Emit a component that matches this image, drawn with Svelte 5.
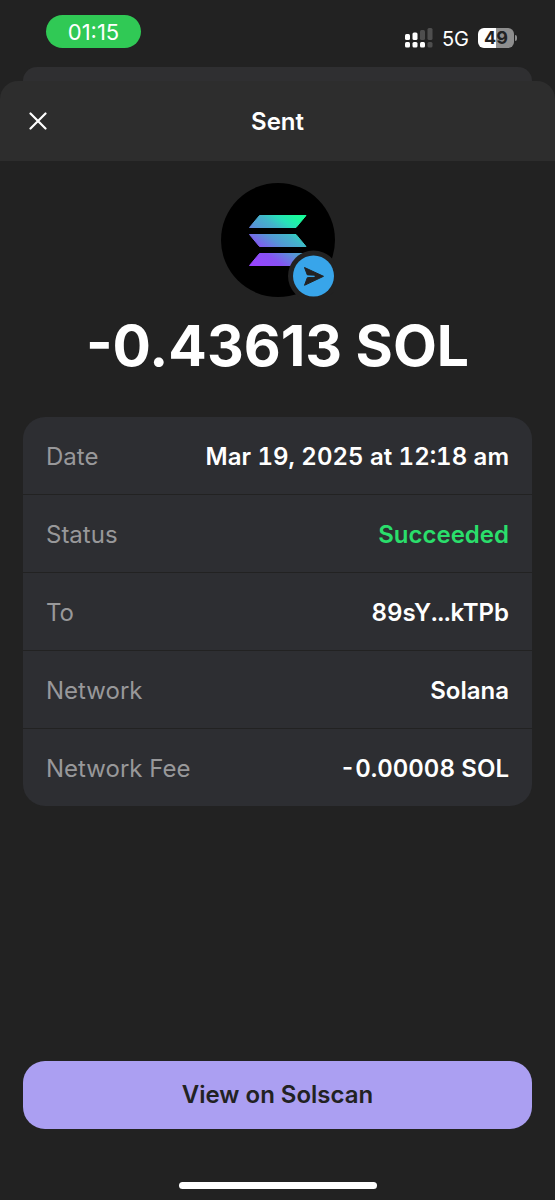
<script lang="ts">
	type Row = {
		label: string;
		value: string;
		success?: boolean;
	};

	const rows: Row[] = [
		{ label: 'Date', value: 'Mar 19, 2025 at 12:18 am' },
		{ label: 'Status', value: 'Succeeded', success: true },
		{ label: 'To', value: '89sY...kTPb' },
		{ label: 'Network', value: 'Solana' },
		{ label: 'Network Fee', value: '-0.00008 SOL' }
	];
</script>

<div class="screen">
	<div class="status-bar">
		<span class="status-bar__time">01:15</span>
		<div class="status-bar__right">
			<svg class="signal" width="28" height="20" viewBox="0 0 28 20" aria-hidden="true">
				<g fill="#fff">
					<rect x="0" y="6" width="5" height="6" rx="1.5" />
					<rect x="7.5" y="4.5" width="5" height="7.5" rx="1.5" />
					<rect x="0" y="14" width="5" height="5.5" rx="1.5" />
					<rect x="7.5" y="14" width="5" height="5.5" rx="1.5" />
					<rect x="15" y="14" width="5" height="5.5" rx="1.5" />
				</g>
				<g fill="#4e4e4e">
					<rect x="15" y="2" width="5" height="10" rx="1.5" />
					<rect x="22.5" y="0" width="5" height="12" rx="1.5" />
					<rect x="22.5" y="14" width="5" height="5.5" rx="1.5" />
				</g>
			</svg>
			<span class="status-bar__carrier">5G</span>
			<div class="battery"><span class="battery__level">49</span></div>
		</div>
	</div>

	<div class="sheet-behind"></div>

	<main class="sheet">
		<header class="sheet__header">
			<button type="button" class="close" aria-label="Close">
				<svg width="18" height="18" viewBox="0 0 18 18" aria-hidden="true">
					<path d="M1.5 1.5 16.5 16.5M16.5 1.5 1.5 16.5" stroke="#fff" stroke-width="2.2" stroke-linecap="round" />
				</svg>
			</button>
			<h1 class="sheet__title">Sent</h1>
		</header>

		<div class="sheet__body">
			<svg class="token" width="114" height="114" viewBox="0 0 114 114" aria-hidden="true">
				<defs>
					<linearGradient id="sol" gradientUnits="userSpaceOnUse" x1="36" y1="84" x2="74" y2="32">
						<stop offset="0" stop-color="#9945ff" />
						<stop offset="0.25" stop-color="#8752f3" />
						<stop offset="0.5" stop-color="#5497d5" />
						<stop offset="0.68" stop-color="#43b4ca" />
						<stop offset="0.82" stop-color="#28e0b9" />
						<stop offset="1" stop-color="#19fb9b" />
					</linearGradient>
				</defs>
				<circle cx="57" cy="57" r="57" fill="#000" />
				<g fill="url(#sol)" stroke="url(#sol)" stroke-linejoin="round">
					<path d="M38.5 32.5H85L75 44.5H28.5Z" />
					<path d="M28.5 51.5H75L85 63.5H38.5Z" />
					<path d="M38.5 70.5H85L75 82.5H28.5Z" />
				</g>
				<circle cx="92.5" cy="93" r="25.5" fill="#222" />
				<circle cx="92.5" cy="93" r="20.5" fill="#38a5ea" />
				<path
					d="M83.5 84.5 102.5 93.3 83.5 102.3 86.3 94.7 94 94.1V92.5L86.3 91.9Z"
					fill="#222"
					stroke="#222"
					stroke-linejoin="round"
				/>
				<path d="M85.5 93.3H93.5" stroke="#38a5ea" stroke-width="1.2" />
			</svg>

			<p class="amount">-0.43613 SOL</p>

			<dl class="details">
				{#each rows as row}
					<div class="details__row">
						<dt>{row.label}</dt>
						<dd data-success={row.success}>{row.value}</dd>
					</div>
				{/each}
			</dl>
		</div>

		<footer class="sheet__footer">
			<button type="button" class="primary">View on Solscan</button>
			<div class="home-indicator"></div>
		</footer>
	</main>
</div>

<style>
	:global(body) {
		margin: 0;
		background: #222;
	}

	.screen {
		display: flex;
		flex-direction: column;
		min-height: 100vh;
		background: #222;
		color: #fff;
		font-family: Inter, 'Liberation Sans', sans-serif;
		font-size: 24px;
		line-height: 32px;
	}

	.status-bar {
		display: flex;
		align-items: flex-start;
		justify-content: space-between;
		box-sizing: border-box;
		height: 67px;
		padding: 15px 41px 0 46px;
	}

	.status-bar__time {
		width: 95px;
		border-radius: 17px;
		background: #30c955;
		font-size: 22px;
		line-height: 34px;
		height: 33px;
		text-align: center;
	}

	.status-bar__right {
		display: flex;
		align-items: center;
		gap: 9px;
		padding-top: 12px;
	}

	.status-bar__carrier {
		font-size: 20px;
		line-height: 20px;
		padding-top: 2px;
	}

	.battery {
		position: relative;
		width: 36px;
		height: 20px;
		border-radius: 6px;
		background: linear-gradient(90deg, #fff 50%, #8e8e8e 50%);
	}

	.battery::after {
		content: '';
		position: absolute;
		top: 7px;
		right: -3px;
		width: 2px;
		height: 6px;
		border-radius: 0 2px 2px 0;
		background: #8e8e8e;
	}

	.battery__level {
		display: block;
		color: #222;
		font-size: 18px;
		font-weight: 700;
		line-height: 20px;
		text-align: center;
	}

	.sheet-behind {
		height: 14px;
		margin: 0 23px;
		border-radius: 14px 14px 0 0;
		background: #2f2f31;
	}

	.sheet {
		display: flex;
		flex: 1;
		flex-direction: column;
	}

	.sheet__header {
		display: grid;
		grid-template-columns: 40px 1fr 40px;
		align-items: center;
		height: 80px;
		padding: 0 18px;
		border-radius: 18px 18px 0 0;
		background: #2d2d2d;
	}

	.close {
		display: grid;
		place-items: center;
		width: 40px;
		height: 40px;
		padding: 0;
		border: 0;
		background: none;
		cursor: pointer;
	}

	.sheet__title {
		margin: 0;
		padding-top: 2px;
		font-size: 24px;
		font-weight: 600;
		text-align: center;
	}

	.sheet__body {
		display: flex;
		flex: 1;
		flex-direction: column;
		align-items: center;
		padding: 22px 23px;
	}

	.amount {
		margin: 12px 0 34px;
		font-size: 57px;
		font-weight: 700;
		line-height: 74px;
		white-space: nowrap;
	}

	.details {
		align-self: stretch;
		margin: 0;
		border-radius: 22px;
		background: #2d2e32;
	}

	.details__row {
		display: flex;
		align-items: center;
		justify-content: space-between;
		height: 75px;
		padding: 2px 23px 0;
	}

	.details__row + .details__row {
		border-top: 1px solid #222;
	}

	dt {
		color: #98989a;
	}

	dd {
		margin: 0;
		font-weight: 600;
		font-variant-numeric: tabular-nums;
	}

	dd[data-success='true'] {
		color: #2ade6b;
	}

	.sheet__footer {
		display: flex;
		flex-direction: column;
		align-items: center;
		gap: 53px;
		padding: 0 23px 11px;
	}

	.primary {
		width: 100%;
		height: 68px;
		border: 0;
		border-radius: 22px;
		background: #ab9ff2;
		color: #222;
		font: inherit;
		font-weight: 600;
		cursor: pointer;
	}

	.home-indicator {
		width: 198px;
		height: 7px;
		border-radius: 4px;
		background: #fff;
	}
</style>
